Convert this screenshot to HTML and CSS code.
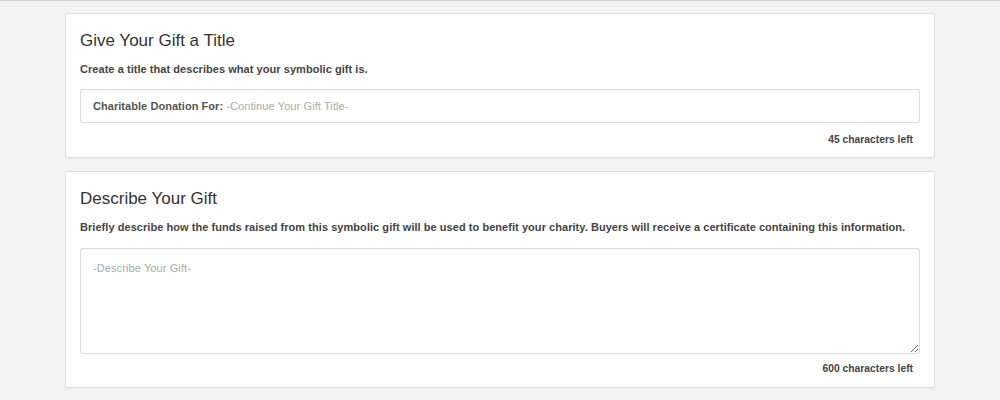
FILE: index.html
```html
<!DOCTYPE html>
<html>
<head>
<meta charset="utf-8">
<link rel="stylesheet" href="styles.css">
</head>
<body>
<div class="page">
  <section class="card">
    <h2 class="card-title">Give Your Gift a Title</h2>
    <p class="card-desc">Create a title that describes what your symbolic gift is.</p>
    <div class="field">
      <span class="prefix">Charitable Donation For:</span>
      <input class="field-input" type="text" placeholder="-Continue Your Gift Title-">
    </div>
    <div class="counter">45 characters left</div>
  </section>
  <section class="card card-tall">
    <h2 class="card-title">Describe Your Gift</h2>
    <p class="card-desc">Briefly describe how the funds raised from this symbolic gift will be used to benefit your charity. Buyers will receive a certificate containing this information.</p>
    <textarea class="area" placeholder="-Describe Your Gift-"></textarea>
    <div class="counter">600 characters left</div>
  </section>
</div>
</body>
</html>
```
FILE: styles.css
```css
html, body {
  margin: 0;
  padding: 0;
}
body {
  background: #f3f3f3;
  border-top: 1px solid #cfcfcf;
  font-family: "Liberation Sans", Arial, sans-serif;
  color: #333;
  width: 1000px;
  height: 399px;
  overflow: hidden;
}
.page {
  padding: 12px 65px 0 65px;
  display: flex;
  flex-direction: column;
  gap: 13px;
}
.card {
  background: #fff;
  border: 1px solid #dedede;
  border-radius: 2px;
  padding: 15px 14px 11px 14px;
  box-shadow: 0 1px 1px rgba(0,0,0,0.03);
}
.card-tall {
  padding-bottom: 12px;
}
.card-title {
  margin: 2px 0 0 0;
  font-size: 17px;
  font-weight: normal;
  line-height: 20px;
  color: #333;
}
.card-desc {
  margin: 11px 0 0 0;
  font-size: 11px;
  font-weight: bold;
  line-height: 14px;
  color: #444;
  letter-spacing: 0.05px;
}
.field {
  margin-top: 13px;
  height: 32px;
  border: 1px solid #dcdcdc;
  border-radius: 2px;
  display: flex;
  align-items: center;
  padding: 0 12px;
  box-shadow: inset 0 1px 1px rgba(0,0,0,0.03);
}
.prefix {
  font-size: 11px;
  font-weight: bold;
  color: #555;
  margin-right: 3px;
  white-space: nowrap;
  letter-spacing: 0.05px;
}
.field-input {
  flex: 1;
  border: none;
  outline: none;
  padding: 0;
  font-family: "Liberation Sans", Arial, sans-serif;
  font-size: 11px;
  color: #333;
  background: transparent;
}
.field-input::placeholder,
.area::placeholder {
  color: #aaa;
  letter-spacing: 0.1px;
}
.counter {
  text-align: right;
  font-size: 10.3px;
  font-weight: bold;
  color: #444;
  margin-top: 11px;
  padding-right: 7px;
  line-height: 12px;
}
.area {
  display: block;
  box-sizing: border-box;
  margin-top: 14px;
  width: 100%;
  height: 106px;
  border: 1px solid #dcdcdc;
  border-radius: 2px;
  padding: 13px 12px;
  font-family: "Liberation Sans", Arial, sans-serif;
  font-size: 11px;
  color: #333;
  resize: vertical;
  outline: none;
  box-shadow: inset 0 1px 1px rgba(0,0,0,0.03);
}
.area + .counter {
  margin-top: 9px;
}
```
